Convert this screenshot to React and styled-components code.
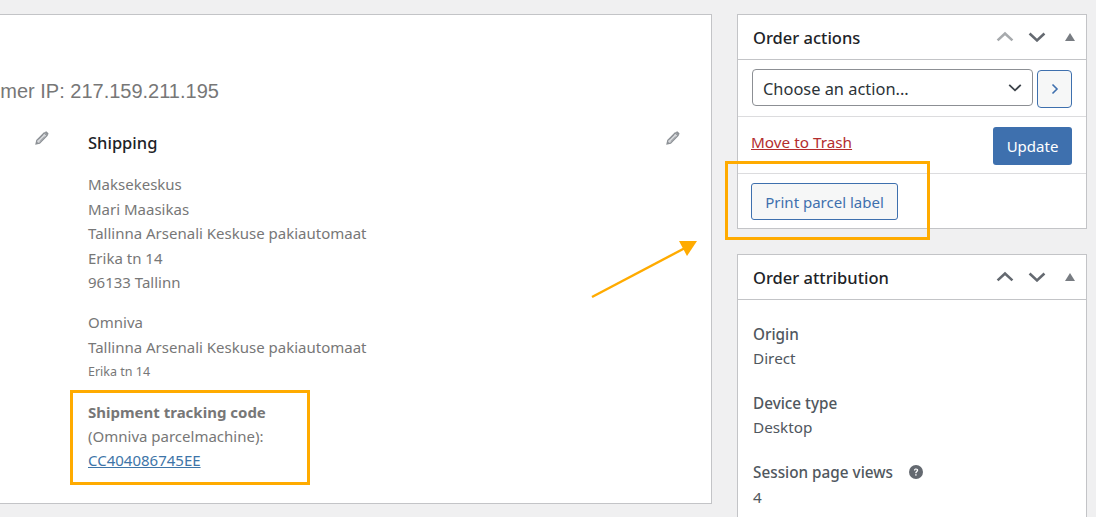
import React from "react";
import styled, { createGlobalStyle } from "styled-components";

const GlobalStyle = createGlobalStyle`
  html, body { margin: 0; padding: 0; height: 100%; overflow: hidden; background: #f0f0f1; }
  body { font-family: "Noto Sans", "Open Sans", sans-serif; font-size: 15px; color: #50575e; }
`;

const Page = styled.div`
  position: relative;
  width: 1096px;
  height: 517px;
  overflow: hidden;
  display: flex;
  align-items: flex-start;
  gap: 25px;
  padding-top: 14px;
  box-sizing: border-box;
`;

const MainPanel = styled.section`
  width: 712px;
  height: 490px;
  box-sizing: border-box;
  flex: none;
  background: #fff;
  border: 1px solid #c3c4c7;
  border-left: 0;
  overflow: hidden;
`;

const IpLine = styled.p`
  margin: 62px 0 0 -52px;
  font-family: "Liberation Sans", Arial, sans-serif;
  font-size: 20px;
  line-height: 28px;
  color: #777;
  white-space: nowrap;
`;

const Columns = styled.div`
  display: flex;
  margin-top: 21px;
`;

const BillingStub = styled.div`
  width: 88px;
  flex: none;
  display: flex;
  justify-content: flex-end;
  padding: 5px 39px 0 0;
  box-sizing: border-box;
`;

const ShippingColumn = styled.div`
  width: 592px;
  flex: none;
`;

const ColumnHead = styled.div`
  display: flex;
  justify-content: space-between;
  align-items: flex-start;
  height: 30px;
  padding-top: 5px;
  box-sizing: border-box;
`;

const ColumnTitle = styled.h3`
  margin: 0;
  font-size: 16.5px;
  font-weight: 500;
  line-height: 24px;
  color: #1d2327;
`;

const Address = styled.div`
  margin-top: ${(p) => p.$top}px;
  font-size: 15px;
  line-height: ${(p) => p.$line || 24.5}px;
  color: #777;
  white-space: nowrap;
`;

const SmallLine = styled.div`
  margin-top: 1px;
  font-size: 12.5px;
  line-height: 24.5px;
  color: #777;
`;

const TrackingLabel = styled.strong`
  display: block;
  font-weight: 700;
`;

const TrackingLink = styled.a`
  color: #3e75a8;
  text-decoration: underline;
`;

const Sidebar = styled.aside`
  width: 350px;
  flex: none;
  display: flex;
  flex-direction: column;
  gap: 25px;
`;

const Card = styled.section`
  background: #fff;
  border: 1px solid #c3c4c7;
  box-sizing: border-box;
  height: ${(p) => p.$height}px;
`;

const CardHead = styled.header`
  height: 45px;
  box-sizing: border-box;
  border-bottom: 1px solid #c3c4c7;
  display: flex;
  align-items: center;
  padding: 0 11px 0 15px;
`;

const CardTitle = styled.h2`
  flex: 1;
  margin: 1px 0 0;
  font-size: 16.5px;
  font-weight: 500;
  color: #1d2327;
`;

const HeadIcons = styled.div`
  display: flex;
  align-items: center;
  gap: 14px;
  margin-top: -1px;
`;

const TriangleSlot = styled.span`
  display: flex;
  margin-left: 5px;
`;

const SelectRow = styled.div`
  display: flex;
  gap: 4px;
  height: 57px;
  box-sizing: border-box;
  padding: 9px 14px 0;
  border-bottom: 1px solid #dcdcde;
  align-items: flex-start;
`;

const SelectBox = styled.div`
  width: 281px;
  height: 37px;
  box-sizing: border-box;
  border: 1px solid #8c8f94;
  border-radius: 4px;
  display: flex;
  align-items: center;
  justify-content: space-between;
  padding: 1px 10px 0;
  font-size: 16.4px;
  color: #2c3338;
`;

const NextButton = styled.button`
  width: 35px;
  height: 38px;
  margin-top: 1px;
  padding: 0;
  border: 1px solid #3e70ae;
  border-radius: 4px;
  background: #f6f7f7;
  display: flex;
  align-items: center;
  justify-content: center;
`;

const ActionRow = styled.div`
  display: flex;
  justify-content: space-between;
  align-items: flex-start;
  height: 57px;
  box-sizing: border-box;
  padding: 10px 14px 0 13px;
  border-bottom: 1px solid #dcdcde;
`;

const TrashLink = styled.a`
  margin-top: 3px;
  font-size: 15.3px;
  line-height: 24px;
  color: #b32d2e;
  text-decoration: underline;
`;

const UpdateButton = styled.button`
  width: 79px;
  height: 38px;
  border: 0;
  border-radius: 3px;
  background: #3e70ae;
  color: #fff;
  font: inherit;
  font-size: 15px;
  padding: 0;
`;

const PrintRow = styled.div`
  padding: 9px 13px;
`;

const PrintButton = styled.button`
  width: 147px;
  height: 37px;
  border: 1px solid #3e70ae;
  border-radius: 3px;
  background: #f6f7f7;
  color: #3e70ae;
  font: inherit;
  font-size: 15px;
  padding: 0;
`;

const AttributionBody = styled.div`
  padding: 22px 15px 0;
`;

const AttrGroup = styled.div`
  margin-bottom: 21px;
  line-height: 24px;
  font-size: 15.3px;
`;

const AttrLabel = styled.div`
  display: flex;
  align-items: center;
  gap: 16px;
  font-weight: 500;
  color: #50575e;
`;

const AttrValue = styled.div`
  color: #50575e;
  margin-top: ${(p) => (p.$loose ? 1 : 0)}px;
`;

const Callout = styled.div`
  position: absolute;
  left: ${(p) => p.$left}px;
  top: ${(p) => p.$top}px;
  width: ${(p) => p.$width}px;
  height: ${(p) => p.$height}px;
  box-sizing: border-box;
  border: 3px solid #ffab00;
  pointer-events: none;
`;

const ArrowLayer = styled.svg`
  position: absolute;
  left: 585px;
  top: 232px;
`;

const Chevron = ({ dir = "down", color = "#50575e", size = 18, weight = 2.6 }) => (
  <svg width={size} height={size * 0.66} viewBox="0 0 18 12" fill="none">
    <path
      d={dir === "down" ? "M1.5 2.5 9 9.5l7.5-7" : "M1.5 9.5 9 2.5l7.5 7"}
      stroke={color}
      strokeWidth={weight}
    />
  </svg>
);

const Triangle = () => (
  <svg width="10" height="8" viewBox="0 0 10 8">
    <path d="M5 0 10 8H0Z" fill="#787c82" />
  </svg>
);

const Pencil = () => (
  <svg width="14" height="14" viewBox="0 0 14 14" fill="none">
    <path d="M1 13l.8-3.6 7.4-7.6 2.9 2.8-7.5 7.6Z" fill="#d5d7da" stroke="#8c9095" strokeWidth="1.2" />
    <path d="M3.2 8.6l5-5M5 10.4l5-5" stroke="#8c9095" strokeWidth="0.9" />
    <path d="M9.7 1.3l.7-.6a1 1 0 0 1 1.4 0l1.4 1.4a1 1 0 0 1 0 1.4l-.7.7Z" fill="#8c9095" />
    <path d="M1 13l.6-2.7 2.1 2.1Z" fill="#8c9095" />
  </svg>
);

const HelpIcon = () => (
  <svg width="14" height="14" viewBox="0 0 14 14">
    <circle cx="7" cy="7" r="7" fill="#646970" />
    <path d="M4.9 5.4c.1-1.3 1-1.9 2.2-1.9 1.3 0 2.1.7 2.1 1.8 0 1.6-1.7 1.6-1.7 3H6.2c0-2 1.6-2 1.6-3 0-.4-.3-.7-.8-.7s-.8.3-.9.8Z" fill="#fff" />
    <rect x="6.2" y="9.2" width="1.4" height="1.4" fill="#fff" />
  </svg>
);

const MoveIcons = ({ upColor }) => (
  <HeadIcons>
    <Chevron dir="up" color={upColor} />
    <Chevron dir="down" color="#646970" />
    <TriangleSlot>
      <Triangle />
    </TriangleSlot>
  </HeadIcons>
);

const attribution = [
  { label: "Origin", value: "Direct" },
  { label: "Device type", value: "Desktop" },
  { label: "Session page views", value: "4", help: true },
];

export default function App() {
  return (
    <>
      <GlobalStyle />
      <Page>
        <MainPanel>
          <IpLine>Customer IP: 217.159.211.195</IpLine>
          <Columns>
            <BillingStub>
              <Pencil />
            </BillingStub>
            <ShippingColumn>
              <ColumnHead>
                <ColumnTitle>Shipping</ColumnTitle>
                <Pencil />
              </ColumnHead>
              <Address $top={16}>
                Maksekeskus
                <br />
                Mari Maasikas
                <br />
                Tallinna Arsenali Keskuse pakiautomaat
                <br />
                Erika tn 14
                <br />
                96133 Tallinn
              </Address>
              <Address $top={15.5}>
                Omniva
                <br />
                Tallinna Arsenali Keskuse pakiautomaat
                <SmallLine>Erika tn 14</SmallLine>
              </Address>
              <Address $top={15.5} $line={24}>
                <TrackingLabel>Shipment tracking code</TrackingLabel>
                (Omniva parcelmachine):
                <br />
                <TrackingLink href="#">CC404086745EE</TrackingLink>
              </Address>
            </ShippingColumn>
          </Columns>
        </MainPanel>
        <Sidebar>
          <Card $height={215}>
            <CardHead>
              <CardTitle>Order actions</CardTitle>
              <MoveIcons upColor="#a7aaad" />
            </CardHead>
            <SelectRow>
              <SelectBox>
                Choose an action...
                <Chevron size={14} color="#3c434a" weight={2.4} />
              </SelectBox>
              <NextButton aria-label="Run action">
                <svg width="8" height="12" viewBox="0 0 8 12" fill="none">
                  <path d="M1.5 1.5 6 6l-4.5 4.5" stroke="#3e70ae" strokeWidth="1.6" />
                </svg>
              </NextButton>
            </SelectRow>
            <ActionRow>
              <TrashLink href="#">Move to Trash</TrashLink>
              <UpdateButton>Update</UpdateButton>
            </ActionRow>
            <PrintRow>
              <PrintButton>Print parcel label</PrintButton>
            </PrintRow>
          </Card>
          <Card $height={300}>
            <CardHead>
              <CardTitle>Order attribution</CardTitle>
              <MoveIcons upColor="#646970" />
            </CardHead>
            <AttributionBody>
              {attribution.map((row) => (
                <AttrGroup key={row.label}>
                  <AttrLabel>
                    {row.label}
                    {row.help && <HelpIcon />}
                  </AttrLabel>
                  <AttrValue $loose={row.help}>{row.value}</AttrValue>
                </AttrGroup>
              ))}
            </AttributionBody>
          </Card>
        </Sidebar>
        <Callout $left={725} $top={161} $width={205} $height={79} />
        <Callout $left={70} $top={390} $width={240} $height={95} />
        <ArrowLayer width="120" height="70" viewBox="0 0 120 70">
          <path d="M7 65 100 16" stroke="#ffab00" strokeWidth="2.4" fill="none" />
          <path d="M112 9 94 9 102 24Z" fill="#ffab00" />
        </ArrowLayer>
      </Page>
    </>
  );
}
